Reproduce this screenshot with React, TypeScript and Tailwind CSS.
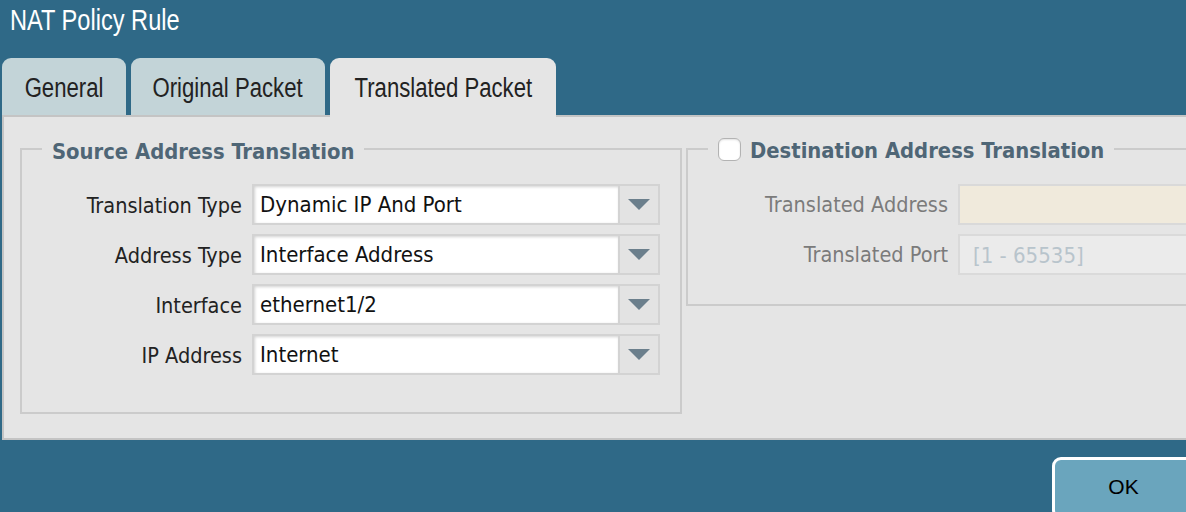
import React from 'react'

const helv = "font-['Liberation_Sans',Arial,sans-serif]"
const tahoma = "font-['DejaVu_Sans_Condensed','Liberation_Sans',sans-serif]"

const sourceRows = [
    { label: 'Translation Type', value: 'Dynamic IP And Port' },
    { label: 'Address Type', value: 'Interface Address' },
    { label: 'Interface', value: 'ethernet1/2' },
    { label: 'IP Address', value: 'Internet' },
]

function Caret() {
    return (
        <svg width="22" height="12" viewBox="0 0 22 12">
            <polygon points="0,0 22,0 11,11" fill="#6b7f8c" />
        </svg>
    )
}

function Select({ value }: { value: string }) {
    return (
        <div className="flex h-[41px] border-2 border-[#d3d3d3] bg-[#e3e3e3]">
            <div className="flex flex-1 items-center bg-white pl-[6px] text-[22px] text-[#111] shadow-[inset_1px_1px_3px_rgba(0,0,0,0.18)]">
                {value}
            </div>
            <div className="flex w-[40px] items-center justify-center border-l-2 border-[#d3d3d3]">
                <Caret />
            </div>
        </div>
    )
}

// condensed look of the title font: Liberation Sans squeezed horizontally
function Condensed({ children }: { children: React.ReactNode }) {
    return <span className="inline-block origin-center scale-x-[0.82] whitespace-nowrap">{children}</span>
}

export default function App() {
    return (
        <div className={`h-[512px] w-[1186px] overflow-hidden bg-[#2f6987] ${tahoma}`}>
            <div className="w-[1250px]">
                {/* Title */}
                <div className={`h-[58px] pl-[10px] pt-[2px] text-[29.5px] leading-[35px] text-white ${helv}`}>
                    <span className="inline-block origin-left scale-x-[0.8] whitespace-nowrap">NAT Policy Rule</span>
                </div>

                {/* Tabs */}
                <div className={`flex h-[57px] gap-[5px] pl-[2px] text-[27px] text-[#222] ${helv}`}>
                    <div className="flex w-[124px] items-center justify-center rounded-t-[9px] bg-[#c3d4d8] pt-[4px]">
                        <Condensed>General</Condensed>
                    </div>
                    <div className="flex w-[194px] items-center justify-center rounded-t-[9px] bg-[#c3d4d8] pt-[4px]">
                        <Condensed>Original Packet</Condensed>
                    </div>
                    <div className="relative z-10 -mb-[2px] flex h-[59px] w-[226px] items-center justify-center rounded-t-[9px] bg-[#e5e5e5] pb-[2px] pt-[4px]">
                        <Condensed>Translated Packet</Condensed>
                    </div>
                </div>

                {/* Panel */}
                <div className="ml-[2px] flex h-[325px] items-start gap-[4px] border-2 border-r-0 border-[#c4c4c4] bg-[#e5e5e5] pl-[16px] pt-[19px]">
                    <fieldset className="h-[278px] w-[662px] shrink-0 border-2 border-[#cbcbcb]">
                        <legend className="ml-[20px] px-[10px] text-[21.8px] font-bold leading-[26px] text-[#4f6676]">
                            <span className="relative top-[3px]">Source Address Translation</span>
                        </legend>
                        <div className="grid grid-cols-[220px_408px] gap-x-[10px] gap-y-[9px] pt-[22px]">
                            {sourceRows.map((row) => (
                                <React.Fragment key={row.label}>
                                    <div className="flex items-center justify-end pt-[3px] text-[21.5px] text-[#222]">{row.label}</div>
                                    <Select value={row.value} />
                                </React.Fragment>
                            ))}
                        </div>
                    </fieldset>

                    <fieldset className="h-[170px] min-w-0 flex-1 border-2 border-[#cbcbcb]">
                        <legend className="ml-[20px] flex items-center gap-[9px] px-[10px] text-[21.8px] font-bold leading-[26px] text-[#4f6676]">
                            <span className="inline-block h-[23px] w-[23px] rounded-[6px] border border-[#b3b3b3] bg-white shadow-[inset_0_1px_2px_rgba(0,0,0,0.12)]" />
                            <span className="relative top-[2px]">Destination Address Translation</span>
                        </legend>
                        <div className="grid grid-cols-[260px_260px] gap-x-[10px] gap-y-[9px] pt-[22px] text-[21.5px]">
                            <div className="flex items-center justify-end pt-[2px] text-[#7b7b7b]">Translated Address</div>
                            <div className="h-[41px] border-2 border-[#d9d9d9] bg-[#f0eadc]" />
                            <div className="flex items-center justify-end pt-[2px] text-[#7b7b7b]">Translated Port</div>
                            <div className="flex h-[41px] items-center border-2 border-[#dadada] bg-[#ebebeb] pl-[13px] pt-[2px] text-[22px] text-[#b8c4cc]">
                                [1 - 65535]
                            </div>
                        </div>
                    </fieldset>
                </div>

                {/* Footer */}
                <div className="flex justify-end pr-[55px] pt-[17px]">
                    <button className={`flex h-[62px] w-[143px] items-start justify-center rounded-[9px] border-[3px] border-white bg-[#6aa5bd] pt-[11px] text-[21px] text-black ${helv}`}>
                        OK
                    </button>
                </div>
            </div>
        </div>
    )
}
